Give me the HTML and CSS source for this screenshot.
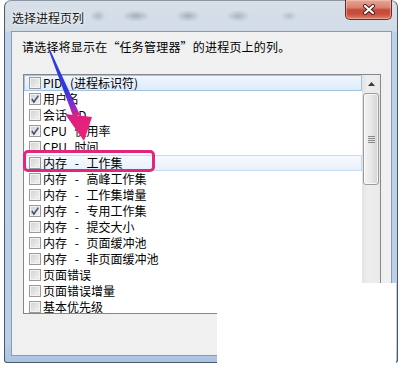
FILE: index.html
```html
<!DOCTYPE html>
<html lang="zh-CN">
<head>
<meta charset="utf-8">
<title>选择进程页列</title>
<link rel="stylesheet" href="styles.css">
</head>
<body>
<div class="window">
  <div class="titlebar">
    <span class="title">选择进程页列</span>
    <button class="close" aria-label="关闭">
      <svg width="14" height="11" viewBox="0 0 14 11">
        <path d="M3 2 L11 9 M11 2 L3 9" stroke="#4a1a14" stroke-width="4" stroke-linecap="round"/>
        <path d="M3 2 L11 9 M11 2 L3 9" stroke="#ffffff" stroke-width="2.2" stroke-linecap="round"/>
      </svg>
    </button>
  </div>
  <div class="panel">
    <p class="intro">请选择将显示在“任务管理器”的进程页上的列。</p>
    <div class="listbox">
      <ul class="rows">
        <li class="row selected"><span class="cb"></span>PID (进程标识符)</li>
        <li class="row"><span class="cb checked"><svg width="10" height="10" viewBox="0 0 10 10"><path d="M1.8 5 L3.9 8 L8.4 1.6" fill="none" stroke="#46546e" stroke-width="1.6"/></svg></span>用户名</li>
        <li class="row"><span class="cb"></span>会话 ID</li>
        <li class="row"><span class="cb checked"><svg width="10" height="10" viewBox="0 0 10 10"><path d="M1.8 5 L3.9 8 L8.4 1.6" fill="none" stroke="#46546e" stroke-width="1.6"/></svg></span>CPU 使用率</li>
        <li class="row"><span class="cb"></span>CPU 时间</li>
        <li class="row hover"><span class="cb"></span>内存 - 工作集</li>
        <li class="row"><span class="cb"></span>内存 - 高峰工作集</li>
        <li class="row"><span class="cb"></span>内存 - 工作集增量</li>
        <li class="row"><span class="cb checked"><svg width="10" height="10" viewBox="0 0 10 10"><path d="M1.8 5 L3.9 8 L8.4 1.6" fill="none" stroke="#46546e" stroke-width="1.6"/></svg></span>内存 - 专用工作集</li>
        <li class="row"><span class="cb"></span>内存 - 提交大小</li>
        <li class="row"><span class="cb"></span>内存 - 页面缓冲池</li>
        <li class="row"><span class="cb"></span>内存 - 非页面缓冲池</li>
        <li class="row"><span class="cb"></span>页面错误</li>
        <li class="row"><span class="cb"></span>页面错误增量</li>
        <li class="row"><span class="cb"></span>基本优先级</li>
      </ul>
      <div class="scrollbar">
        <div class="sb-up"><svg width="7" height="4" viewBox="0 0 7 4"><path d="M0 4 L3.5 0 L7 4 Z" fill="#3c3c3c"/></svg></div>
        <div class="sb-thumb"><span class="grip"></span></div>
      </div>
    </div>
  </div>
</div>
<div class="mask"></div>
<div class="callout"></div>
<svg class="arrow" width="402" height="368" viewBox="0 0 402 368">
  <defs>
    <linearGradient id="ag" gradientUnits="userSpaceOnUse" x1="49" y1="50" x2="84" y2="141">
      <stop offset="0" stop-color="#2a3ee0"/>
      <stop offset="0.45" stop-color="#3038dc"/>
      <stop offset="0.62" stop-color="#8a2ccc"/>
      <stop offset="0.74" stop-color="#e0207e"/>
      <stop offset="1" stop-color="#ea2379"/>
    </linearGradient>
  </defs>
  <polygon points="48.6,50 50.2,50 80,115 73,116" fill="url(#ag)"/>
  <polygon points="65,114 92,117 84,141" fill="url(#ag)"/>
</svg>
</body>
</html>
```

FILE: styles.css
```css
html, body {
  margin: 0;
  padding: 0;
}

body {
  width: 402px;
  height: 368px;
  background: #ffffff;
  position: relative;
  overflow: hidden;
  font-family: "Noto Sans CJK SC", "Noto Sans", sans-serif;
  color: #000;
}

.window {
  box-sizing: border-box;
  margin-left: 4px;
  width: 394px;
  height: 363px;
  border: 1px solid #4d5967;
  border-top-color: #8a96a3;
  border-radius: 7px 7px 3px 3px;
  padding: 0 5px 6px 6px;
  display: flex;
  flex-direction: column;
  background:
    radial-gradient(ellipse 8px 6px at 93px 15px, rgba(110,120,135,.35), transparent),
    radial-gradient(ellipse 14px 6px at 131px 15px, rgba(110,120,135,.45), transparent),
    radial-gradient(ellipse 12px 6px at 183px 15px, rgba(110,120,135,.45), transparent),
    radial-gradient(ellipse 12px 6px at 233px 15px, rgba(110,120,135,.4), transparent),
    radial-gradient(ellipse 8px 5px at 284px 15px, rgba(110,120,135,.3), transparent),
    linear-gradient(to bottom, #d7dfe8 0, #d2dce7 30px, #bed3ea 31px, #b9d0ea 340px, #a9c3e2 100%);
}

.titlebar {
  height: 30px;
  display: flex;
  justify-content: space-between;
  align-items: flex-start;
}

.title {
  padding: 9px 0 0 1px;
  font-size: 12px;
  line-height: 16px;
  color: #151515;
  text-shadow: 0 0 6px rgba(255,255,255,.95), 0 0 3px rgba(255,255,255,.8);
}

.close {
  margin-top: -1px;
  width: 47px;
  height: 20px;
  padding: 0;
  border: 1px solid #6b2a24;
  border-top: none;
  border-radius: 0 0 5px 5px;
  background: linear-gradient(to bottom, #e6a697 0%, #d98070 40%, #c44a3c 52%, #c9503f 75%, #e0826a 100%);
  box-shadow: inset 0 0 0 1px rgba(255,210,200,.45);
  display: flex;
  align-items: center;
  justify-content: center;
}

.panel {
  flex: 1;
  box-sizing: border-box;
  border: 1px solid #8c9aab;
  background: #f0f0f0;
  padding: 7px 0 0 11px;
}

.intro {
  margin: 0 0 19px -1px;
  font-size: 12px;
  line-height: 16px;
  letter-spacing: 0.2px;
  white-space: nowrap;
}

.listbox {
  box-sizing: border-box;
  width: 358px;
  height: 240px;
  border: 1px solid #828790;
  background: #ffffff;
  display: flex;
}

.rows {
  flex: 1;
  margin: 0;
  padding: 0;
  list-style: none;
  overflow: hidden;
}

.row {
  box-sizing: border-box;
  height: 16px;
  display: flex;
  align-items: center;
  gap: 2px;
  padding-left: 5px;
  font-size: 12px;
  line-height: 16px;
  white-space: nowrap;
  word-spacing: 5px;
}

.row.selected {
  background: linear-gradient(to bottom, #f1f7fe, #dceafa);
  box-shadow: inset 0 0 0 1px #a7c3e4;
}

.row.hover {
  background: linear-gradient(to bottom, #f7fbff, #e6f0fb);
  box-shadow: inset 0 0 0 1px #c6dbef;
}

.cb {
  box-sizing: border-box;
  width: 12px;
  height: 12px;
  flex: none;
  border: 1px solid #9a9a9a;
  background: linear-gradient(135deg, #d0d0d0, #f4f4f4);
  box-shadow: inset 0 0 0 1px #f3f3f3;
  display: flex;
  align-items: center;
  justify-content: center;
}

.scrollbar {
  width: 18px;
  flex: none;
  background: linear-gradient(to right, #e3e3e3, #ededed 30%, #eaeaea);
  display: flex;
  flex-direction: column;
}

.sb-up {
  height: 17px;
  display: flex;
  align-items: center;
  justify-content: center;
}

.sb-thumb {
  box-sizing: border-box;
  margin: 1px 1px 0;
  height: 92px;
  border: 1px solid #9b9b9b;
  border-radius: 3px;
  background: linear-gradient(to right, #f4f4f4, #e9e9e9 45%, #d4d4d4);
  box-shadow: inset 0 0 0 1px rgba(255,255,255,.7);
  display: flex;
  align-items: center;
  justify-content: center;
}

.grip {
  width: 7px;
  height: 7px;
  background: repeating-linear-gradient(to bottom, #8a8a8a 0, #8a8a8a 1px, transparent 1px, transparent 2px);
}

.mask {
  position: absolute;
  left: 217px;
  top: 283px;
  width: 179px;
  height: 85px;
  background: #ffffff;
}

.callout {
  position: absolute;
  left: 23px;
  top: 150px;
  width: 132px;
  height: 22px;
  box-sizing: border-box;
  border: 3px solid #e1277b;
  border-radius: 5px;
}

.arrow {
  position: absolute;
  left: 0;
  top: 0;
  pointer-events: none;
}
```
